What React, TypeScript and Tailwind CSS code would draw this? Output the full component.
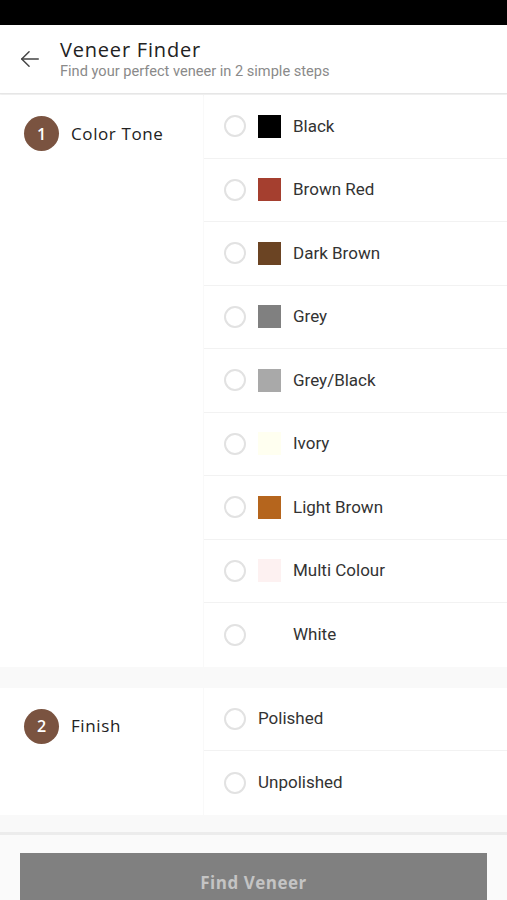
import React from "react";

const tones = [
  { name: "Black", color: "#000000" },
  { name: "Brown Red", color: "#a53f2f" },
  { name: "Dark Brown", color: "#6b4423" },
  { name: "Grey", color: "#808080" },
  { name: "Grey/Black", color: "#a9a9a9" },
  { name: "Ivory", color: "#fffff0" },
  { name: "Light Brown", color: "#b5651d" },
  { name: "Multi Colour", color: "#fdf1f1" },
  { name: "White", color: "#ffffff" },
];

const finishes = ["Polished", "Unpolished"];

function Radio() {
  return <span className="block w-[22px] h-[22px] rounded-full border-2 border-[#e2e2e2] bg-white shrink-0" />;
}

function Step({ n, label }: { n: number; label: string }) {
  return (
    <div className="flex items-center gap-[12px] pl-[24px] pt-[21px]">
      <span className="w-[35px] h-[35px] rounded-full bg-[#7a5340] text-white flex items-center justify-center text-[16px] font-semibold" style={{ fontFamily: "'Open Sans', sans-serif" }}>
        {n}
      </span>
      <span className="text-[17px] font-medium text-[#222] tracking-[0.6px]" style={{ fontFamily: "'Open Sans', sans-serif" }}>{label}</span>
    </div>
  );
}

export default function App() {
  return (
    <div className="w-[507px] h-[900px] bg-[#f9f9f9] flex flex-col overflow-hidden" style={{ fontFamily: "Roboto, 'Noto Sans', sans-serif" }}>
      <div className="h-[25px] bg-black shrink-0" />
      <div className="h-[69px] bg-white flex items-center shrink-0 border-b border-[#e6e6e6] shadow-[0_1px_2px_rgba(0,0,0,0.06)]">
        <div className="w-[60px] flex justify-center items-center">
          <svg width="22" height="22" viewBox="0 0 24 24" fill="none" stroke="#444" strokeWidth="1.6" strokeLinecap="round" strokeLinejoin="round">
            <path d="M21 12H3" />
            <path d="M11 4l-8 8 8 8" />
          </svg>
        </div>
        <div className="flex flex-col">
          <span className="text-[20px] leading-[24px] font-medium text-[#222] tracking-[0.8px]" style={{ fontFamily: "'Open Sans', sans-serif" }}>Veneer Finder</span>
          <span className="text-[14.6px] leading-[18px] text-[#8a8a8a]">Find your perfect veneer in 2 simple steps</span>
        </div>
      </div>

      <div className="flex mt-[1px] shrink-0">
        <div className="w-[203px] bg-white">
          <Step n={1} label="Color Tone" />
        </div>
        <div className="flex-1 ml-[1px] bg-white flex flex-col">
          {tones.map((t, i) => (
            <div key={t.name} className={`h-[63.5px] flex items-center pl-[20px] ${i < tones.length - 1 ? "border-b border-[#f2f2f2]" : ""}`}>
              <Radio />
              <span className="w-[23px] h-[23px] ml-[12px] shrink-0" style={{ backgroundColor: t.color }} />
              <span className="ml-[12px] text-[17px] text-[#333]">{t.name}</span>
            </div>
          ))}
        </div>
      </div>

      <div className="flex mt-[21px] shrink-0">
        <div className="w-[203px] bg-white">
          <Step n={2} label="Finish" />
        </div>
        <div className="flex-1 ml-[1px] bg-white flex flex-col">
          {finishes.map((f, i) => (
            <div key={f} className={`h-[63.5px] flex items-center pl-[20px] ${i < finishes.length - 1 ? "border-b border-[#f2f2f2]" : ""}`}>
              <Radio />
              <span className="ml-[12px] text-[17px] text-[#333]">{f}</span>
            </div>
          ))}
        </div>
      </div>

      <div className="mt-[17px] flex-1 bg-[#fafafa] border-t-[3px] border-[#ececec] pt-[18px] px-[20px]">
        <div className="h-[60px] bg-[#808080] flex justify-center pt-[17px]">
          <span className="text-[17px] font-bold text-[#c4c4c4] tracking-[0.5px]" style={{ fontFamily: "'Open Sans', sans-serif" }}>Find Veneer</span>
        </div>
      </div>
    </div>
  );
}
